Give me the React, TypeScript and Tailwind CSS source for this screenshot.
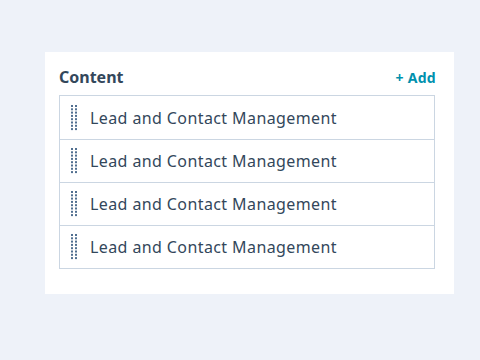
import React from 'react';

const items = [
  'Lead and Contact Management',
  'Lead and Contact Management',
  'Lead and Contact Management',
  'Lead and Contact Management',
];

const Grip: React.FC = () => (
  <svg width="6" height="26" viewBox="0 0 6 26" aria-hidden="true" className="shrink-0">
    {Array.from({ length: 8 }).map((_, r) => (
      <g key={r} fill="#516f90">
        <rect x="0" y={r * 3.3} width="2" height="2" />
        <rect x="4" y={r * 3.3} width="2" height="2" />
      </g>
    ))}
  </svg>
);

const App: React.FC = () => {
  return (
    <div className="w-[480px] h-[360px] bg-[#eef2f9] pt-[52px] pl-[45px] font-['Noto_Sans',sans-serif]">
      <div className="w-[409px] h-[242px] bg-white px-[14px] pt-[14px]">
        {/* Header */}
        <div className="flex items-center justify-between h-[22px] mb-[7px]">
          <h2 className="text-[16px] font-bold text-[#33475b]">Content</h2>
          <button className="text-[14px] font-bold text-[#0091ae] pr-[4px] tracking-[0.3px]">+ Add</button>
        </div>

        {/* List */}
        <ul className="w-[376px] border border-[#cbd6e2]">
          {items.map((label, i) => (
            <li
              key={i}
              className={`flex items-center h-[43px] pl-[11px] gap-[13px] ${i > 0 ? 'border-t border-[#cbd6e2]' : ''}`}
            >
              <Grip />
              <span className="text-[16px] tracking-[0.4px] text-[#33475b]">{label}</span>
            </li>
          ))}
        </ul>
      </div>
    </div>
  );
};

export default App;
